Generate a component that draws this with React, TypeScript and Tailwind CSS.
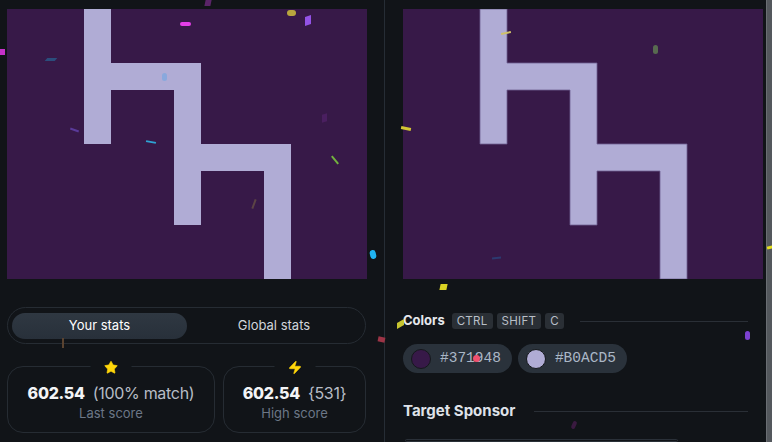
import { Star, Zap } from "lucide-react";

const SHAPE =
  "M77 0H104V54H194V135H284V270H257V162H194V216H167V81H104V135H77Z";

function Canvas({ soft = false }: { soft?: boolean }) {
  return (
    <div className="w-[360px] h-[270px] shrink-0 bg-[#371948]">
      <svg width="360" height="270" viewBox="0 0 360 270" className="block">
        <path
          d={SHAPE}
          fill="#B0ACD5"
          stroke={soft ? "#6e5f93" : "none"}
          strokeWidth={soft ? 0.8 : 0}
        />
      </svg>
    </div>
  );
}

function StatCard({
  icon,
  value,
  extra,
  label,
  className,
}: {
  icon: React.ReactNode;
  value: string;
  extra: string;
  label: string;
  className?: string;
}) {
  return (
    <div
      className={`relative h-[67px] rounded-2xl border border-[#262c33] flex flex-col items-center pt-[16px] ${className ?? ""}`}
    >
      <div className="absolute -top-[8px] left-1/2 -translate-x-1/2 px-[13px] bg-[#111418] flex items-center justify-center h-[16px]">
        {icon}
      </div>
      <div className="flex items-baseline gap-[8px] leading-[20px] tracking-[-0.3px]">
        <span className="text-[16px] font-extrabold text-[#f3f4f6]">{value}</span>
        <span className="text-[16px] text-[#b7bdc6]">{extra}</span>
      </div>
      <span className="text-[13px] leading-[18px] mt-[1px] text-[#6c7787]">{label}</span>
    </div>
  );
}

function Kbd({ children }: { children: React.ReactNode }) {
  return (
    <span className="h-[16px] px-[5px] rounded-[3px] bg-[#2a2f35] text-[#b9bfc7] text-[11.5px] leading-[16px] tracking-wide">
      {children}
    </span>
  );
}

function ColorChip({ hex }: { hex: string }) {
  return (
    <div className="h-[29px] rounded-full bg-[#2a323b] flex items-center pl-[8px] pr-[11px] gap-[9px]">
      <span
        className={`w-[20px] h-[20px] rounded-full border-[1.5px] border-[#15181c] ${hex === "#371948" ? "bg-[#371948]" : "bg-[#B0ACD5]"}`}
      />
      <span className="font-['Liberation_Mono','DejaVu_Sans_Mono',monospace] text-[14.5px] text-[#aab7c6]">
        {hex}
      </span>
    </div>
  );
}

function Confetti() {
  return (
    <>
      <span className="absolute left-[205px] top-0 w-[6px] h-[6px] bg-[#5a2468] -skew-x-12" />
      <span className="absolute left-[180px] top-[22px] w-[11px] h-[4px] rounded-full bg-[#e43ee8]" />
      <span className="absolute left-[287px] top-[10px] w-[9px] h-[6px] rounded-full bg-[#b8a63e]" />
      <span className="absolute left-[305px] top-[16px] w-[6px] h-[9px] bg-[#9352e6] skew-y-[-20deg]" />
      <span className="absolute left-0 top-[49px] w-[5px] h-[6px] bg-[#c531c9]" />
      <span className="absolute left-[46px] top-[58px] w-[10px] h-[3px] bg-[#2b4d7c] -skew-x-[40deg]" />
      <span className="absolute left-[162px] top-[73px] w-[5px] h-[8px] rounded-full bg-[#7fa8de] opacity-80" />
      <span className="absolute left-[70px] top-[129px] w-[9px] h-[2px] bg-[#5a3a9a] rotate-[20deg]" />
      <span className="absolute left-[146px] top-[141px] w-[10px] h-[2px] bg-[#2fa3d4] rotate-[10deg]" />
      <span className="absolute left-[322px] top-[114px] w-[5px] h-[8px] bg-[#4a1f60] skew-y-[-15deg]" />
      <span className="absolute left-[330px] top-[159px] w-[10px] h-[2px] bg-[#73b23f] rotate-[50deg]" />
      <span className="absolute left-[253px] top-[199px] w-[2px] h-[10px] bg-[#5c4445] rotate-[20deg]" />
      <span className="absolute left-[370px] top-[250px] w-[6px] h-[9px] rounded-full bg-[#1fb3f2] -rotate-12" />
      <span className="absolute left-[501px] top-[32px] w-[10px] h-[2px] bg-[#cfc168] -rotate-12" />
      <span className="absolute left-[653px] top-[45px] w-[5px] h-[9px] rounded-full bg-[#586a50]" />
      <span className="absolute left-[401px] top-[127px] w-[10px] h-[3px] bg-[#d4c634] rotate-[12deg]" />
      <span className="absolute left-[492px] top-[257px] w-[9px] h-[2px] bg-[#2d3a70] -rotate-6" />
      <span className="absolute left-[440px] top-[284px] w-[7px] h-[6px] bg-[#d9d223] -skew-x-12" />
      <span className="absolute left-[767px] top-[246px] w-[6px] h-[3px] bg-[#e5df1f] -rotate-12" />
      <span className="absolute left-[62px] top-[338px] w-[2px] h-[10px] bg-[#5a4330]" />
      <span className="absolute left-[378px] top-[337px] w-[7px] h-[5px] bg-[#9c3446] rotate-12" />
      <span className="absolute left-[397px] top-[321px] w-[7px] h-[6px] bg-[#c7c530] -skew-y-[30deg]" />
      <span className="absolute left-[473px] top-[355px] w-[7px] h-[7px] rounded-full bg-[#f0506e]" />
      <span className="absolute left-[745px] top-[331px] w-[5px] h-[9px] rounded-full bg-[#7c41d0]" />
      <span className="absolute left-[572px] top-[421px] w-[4px] h-[8px] rounded-full bg-[#3a1a40] rotate-[25deg]" />
    </>
  );
}

export default function App() {
  return (
    <div className="relative w-[772px] h-[442px] overflow-hidden bg-[#111418] flex font-['Inter','Liberation_Sans',sans-serif]">
      {/* left column */}
      <div className="w-[384px] shrink-0 px-[7px] pt-[9px] flex flex-col">
        <Canvas />
        <div className="mt-[28px] w-[359px] h-[37px] rounded-full border border-[#262c33] flex items-center px-[4px]">
          <button
            type="button"
            className="w-[175px] h-[26px] rounded-full bg-gradient-to-b from-[#2f3842] to-[#28303a] text-white text-[13px]"
          >
            Your stats
          </button>
          <button type="button" className="flex-1 h-[26px] text-[#d1d5db] text-[13px]">
            Global stats
          </button>
        </div>
        <div className="mt-[22px] w-[359px] flex gap-[8px]">
          <StatCard
            className="w-[208px]"
            icon={<Star size={15} fill="#ffd60a" stroke="#ffd60a" strokeWidth={1} />}
            value="602.54"
            extra="(100% match)"
            label="Last score"
          />
          <StatCard
            className="flex-1"
            icon={<Zap size={15} fill="#ffd60a" stroke="#ffd60a" strokeWidth={1} />}
            value="602.54"
            extra="{531}"
            label="High score"
          />
        </div>
      </div>

      {/* right column */}
      <div className="w-[382px] shrink-0 border-l border-[#262d35] px-[18px] pt-[9px] flex flex-col">
        <Canvas soft />
        <div className="mt-[34px] flex items-center h-[16px]">
          <span className="text-[13px] font-bold text-[#e5e7eb] mr-[7px]">Colors</span>
          <div className="flex gap-[4px]">
            <Kbd>CTRL</Kbd>
            <Kbd>SHIFT</Kbd>
            <Kbd>C</Kbd>
          </div>
          <div className="flex-1 h-px bg-[#2a2f36] ml-[16px]" />
        </div>
        <div className="mt-[15px] flex gap-[6px]">
          <ColorChip hex="#371948" />
          <ColorChip hex="#B0ACD5" />
        </div>
        <div className="mt-[28px] flex items-center h-[20px]">
          <span className="text-[15px] font-bold text-[#dfe2e8]">Target Sponsor</span>
          <div className="flex-1 h-px bg-[#2a2f36] ml-[19px]" />
        </div>
        <div className="mt-[18px] ml-[2px] w-[273px] h-[40px] rounded-lg border border-[#2a3038]" />
      </div>

      {/* scrollbar */}
      <div className="w-[6px] shrink-0 bg-[#54585d] border-l border-[#6a6e73]" />

      <Confetti />
    </div>
  );
}
